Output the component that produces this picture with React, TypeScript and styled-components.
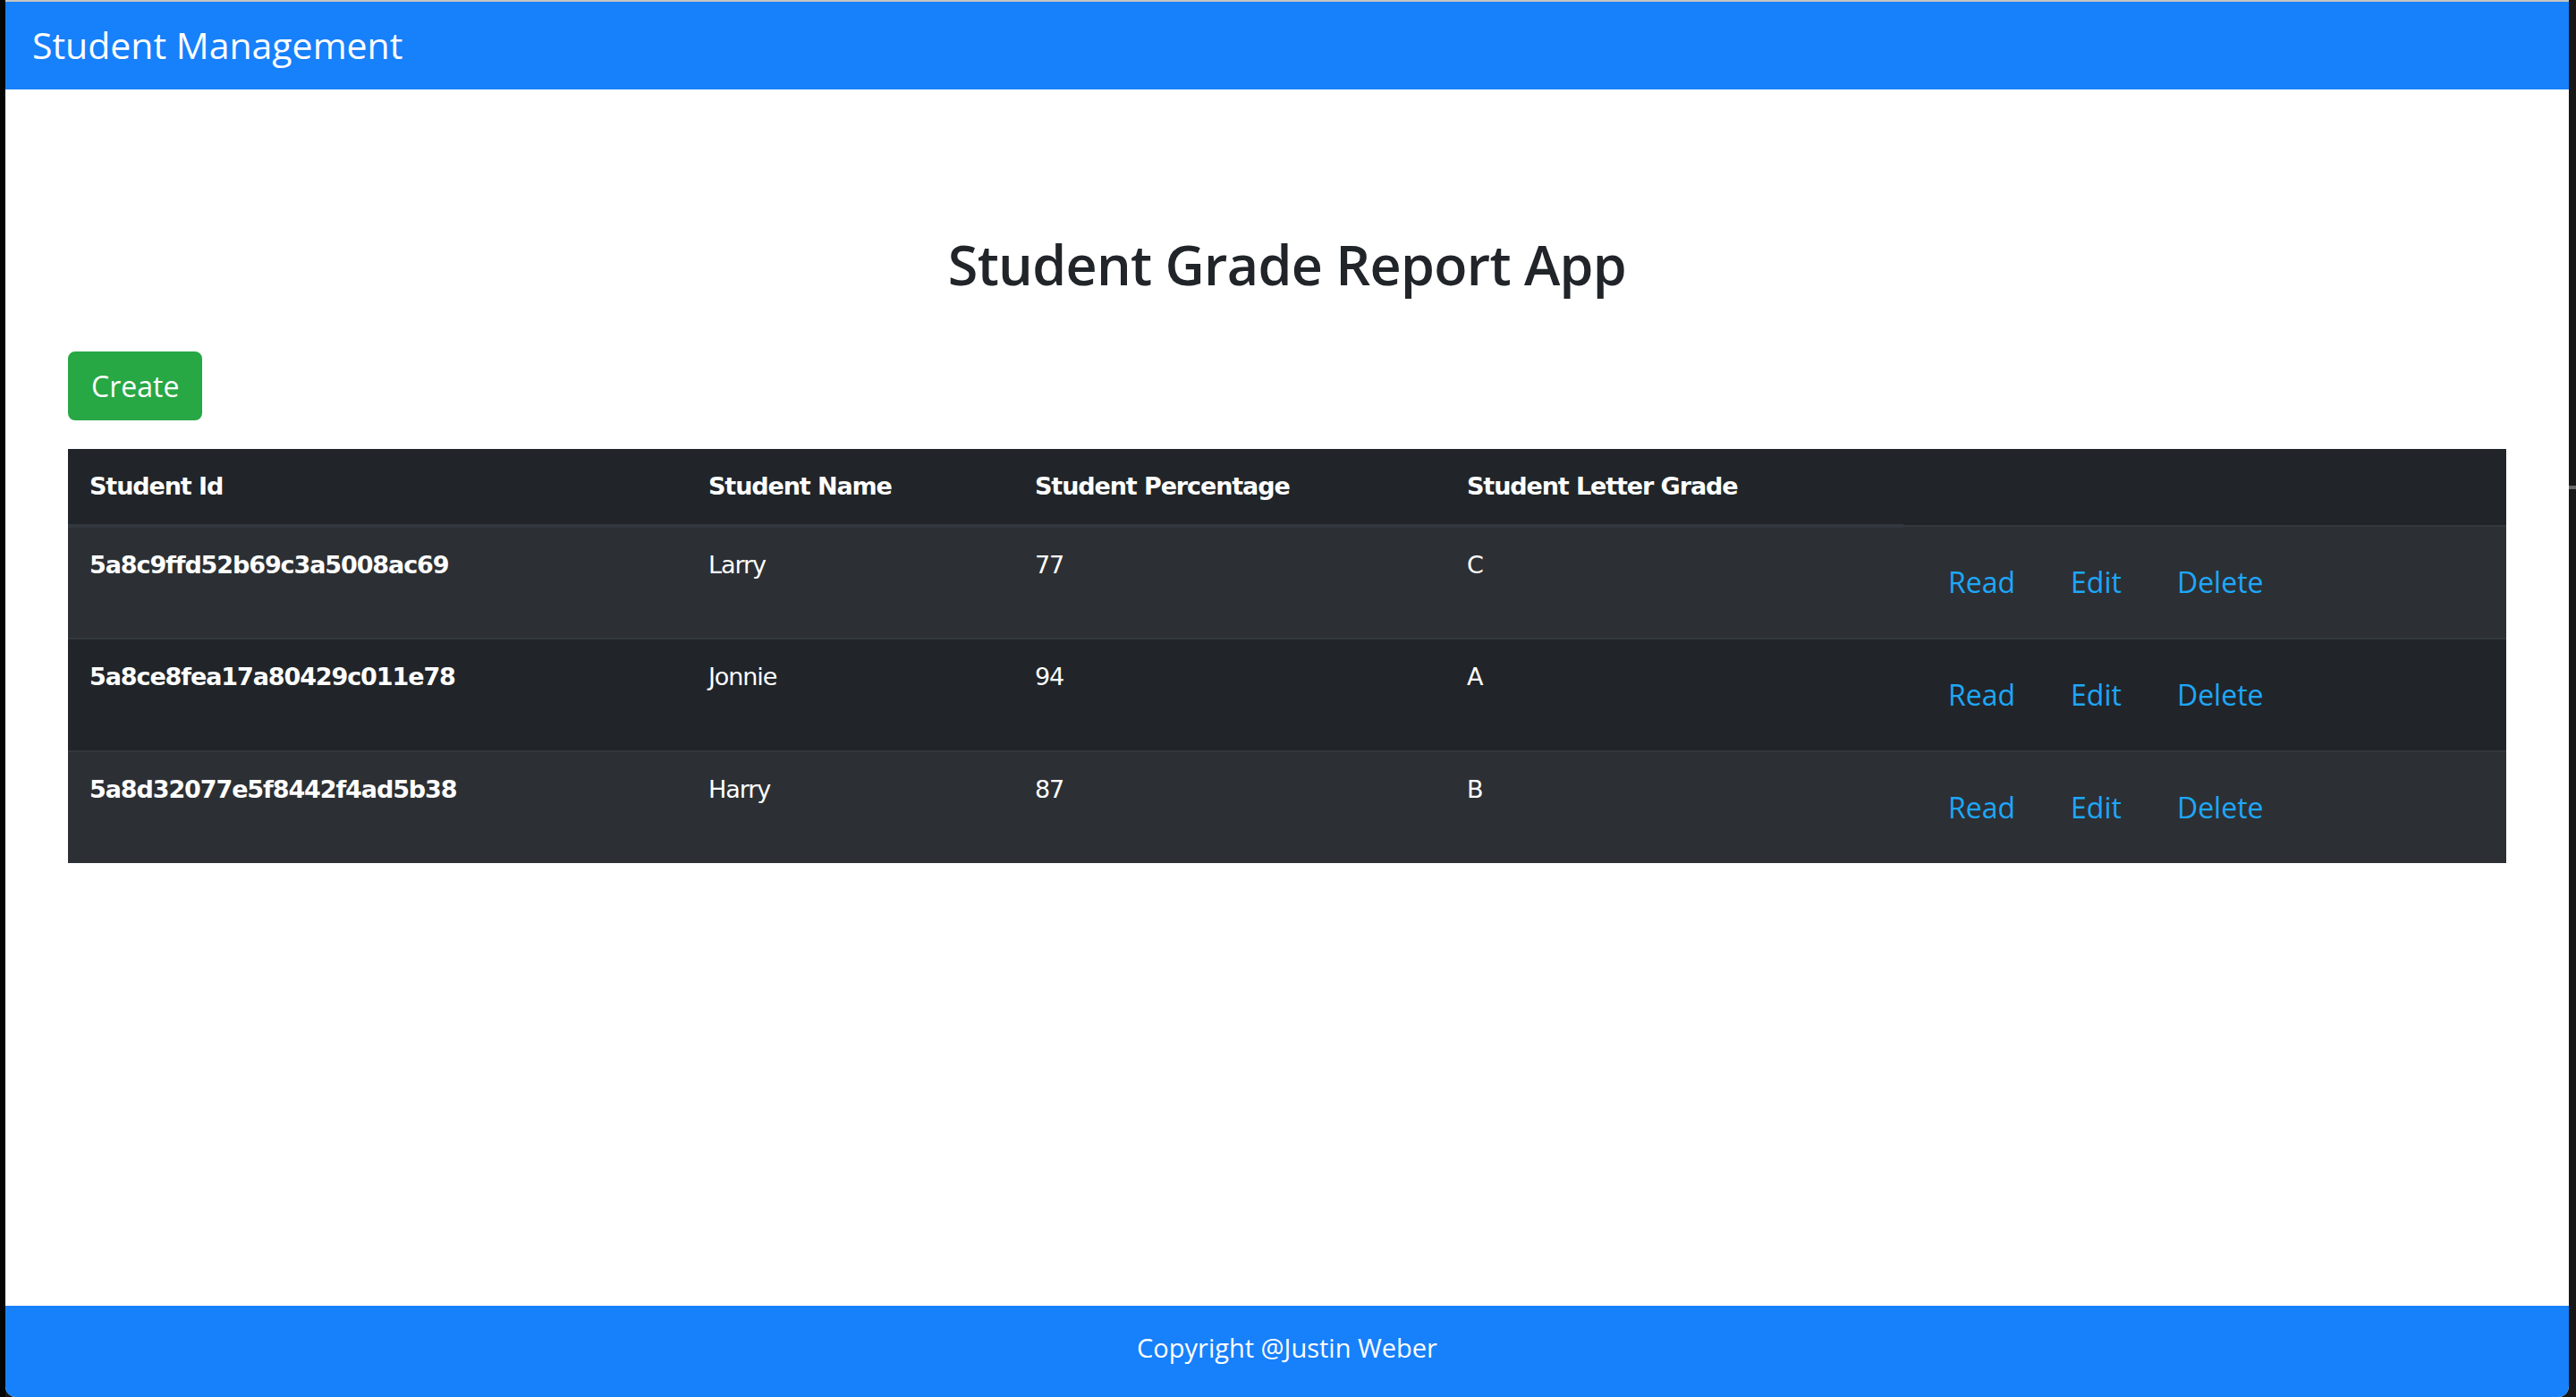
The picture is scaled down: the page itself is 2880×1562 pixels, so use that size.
import React from "react";
import styled, { createGlobalStyle } from "styled-components";

const GlobalStyle = createGlobalStyle`
  html, body {
    margin: 0;
    padding: 0;
    background: #121212;
  }
  body {
    font-family: "Open Sans", "Noto Sans", sans-serif;
  }
  * { box-sizing: border-box; }
`;

const Frame = styled.div`
  display: flex;
  width: 2880px;
  height: 1562px;
  background: #181818;
  overflow: hidden;
`;

const LeftEdge = styled.div`
  width: 6px;
  background: #040506;
`;

const RightEdge = styled.div`
  width: 8px;
  background: #181818;
  display: flex;
  flex-direction: column;
  padding-top: 543px;
`;

const ScrollMark = styled.div`
  height: 4px;
  background: #6b6b6b;
`;

const Window = styled.div`
  flex: 1;
  display: flex;
  flex-direction: column;
  background: #ffffff;
  border-top: 2px solid #c4c4c4;
  border-radius: 0 0 12px 12px;
  overflow: hidden;
`;

const NavBar = styled.header`
  height: 98px;
  flex-shrink: 0;
  display: flex;
  align-items: center;
  padding: 0 0 2px 30px;
  background: #1780fb;
`;

const Brand = styled.span`
  color: #ffffff;
  font-family: "Open Sans", sans-serif;
  font-size: 41px;
  line-height: 60px;
`;

const Main = styled.main`
  flex: 1;
  display: flex;
  flex-direction: column;
  padding: 159px 70px 0;
`;

const Title = styled.h2`
  margin: 0;
  text-align: center;
  font-family: "Open Sans", sans-serif;
  font-weight: 600;
  font-size: 61px;
  line-height: 74px;
  letter-spacing: -0.7px;
  color: #212529;
`;

const CreateButton = styled.button`
  align-self: flex-start;
  margin-top: 60px;
  height: 77px;
  padding: 0 24px;
  border: 2px solid #28a745;
  border-radius: 8px;
  background: #28a745;
  color: #ffffff;
  font-family: "Open Sans", sans-serif;
  font-size: 32px;
  line-height: 48px;
  cursor: pointer;
`;

const Table = styled.table`
  margin-top: 32px;
  width: 2726px;
  table-layout: fixed;
  border-collapse: collapse;
  background: #212529;
  color: #ffffff;
  font-family: "DejaVu Sans", "Liberation Sans", sans-serif;
  font-size: 27px;
  letter-spacing: -1.1px;
  line-height: 36px;
`;

const HeadCell = styled.th`
  padding: 24px;
  text-align: left;
  font-weight: bold;
  vertical-align: bottom;
  border-bottom: 4px solid #32383e;
`;

const Row = styled.tr<{ $striped: boolean }>`
  background: ${(p) => (p.$striped ? "#2c3034" : "transparent")};
`;

const Cell = styled.td<{ $bold?: boolean }>`
  padding: 24px;
  vertical-align: top;
  border-top: 2px solid #32383e;
  font-weight: ${(p) => (p.$bold ? "bold" : "normal")};
  white-space: nowrap;
`;

const Actions = styled.div`
  display: flex;
  gap: 10px;
`;

const LinkButton = styled.button`
  padding: 12px 24px;
  border: 2px solid transparent;
  background: transparent;
  color: #1ea7f9;
  font-family: "Open Sans", sans-serif;
  font-size: 32px;
  line-height: 48px;
  letter-spacing: 0;
  cursor: pointer;
`;

const Footer = styled.footer`
  height: 102px;
  flex-shrink: 0;
  display: flex;
  align-items: center;
  justify-content: center;
  padding-bottom: 10px;
  background: #1780fb;
  color: #ffffff;
  font-family: "Open Sans", sans-serif;
  font-size: 29px;
`;

type Student = { id: string; name: string; pct: number; grade: string };

const students: Student[] = [
  { id: "5a8c9ffd52b69c3a5008ac69", name: "Larry", pct: 77, grade: "C" },
  { id: "5a8ce8fea17a80429c011e78", name: "Jonnie", pct: 94, grade: "A" },
  { id: "5a8d32077e5f8442f4ad5b38", name: "Harry", pct: 87, grade: "B" },
];

export default function App() {
  return (
    <>
      <GlobalStyle />
      <Frame>
        <LeftEdge />
        <Window>
          <NavBar>
            <Brand>Student Management</Brand>
          </NavBar>
          <Main>
            <Title>Student Grade Report App</Title>
            <CreateButton>Create</CreateButton>
            <Table>
              <colgroup>
                <col style={{ width: 692 }} />
                <col style={{ width: 365 }} />
                <col style={{ width: 483 }} />
                <col style={{ width: 512 }} />
                <col style={{ width: 674 }} />
              </colgroup>
              <thead>
                <tr>
                  <HeadCell>Student Id</HeadCell>
                  <HeadCell>Student Name</HeadCell>
                  <HeadCell>Student Percentage</HeadCell>
                  <HeadCell>Student Letter Grade</HeadCell>
                </tr>
              </thead>
              <tbody>
                {students.map((s, i) => (
                  <Row key={s.id} $striped={i % 2 === 0}>
                    <Cell $bold>{s.id}</Cell>
                    <Cell>{s.name}</Cell>
                    <Cell>{s.pct}</Cell>
                    <Cell>{s.grade}</Cell>
                    <Cell>
                      <Actions>
                        <LinkButton>Read</LinkButton>
                        <LinkButton>Edit</LinkButton>
                        <LinkButton>Delete</LinkButton>
                      </Actions>
                    </Cell>
                  </Row>
                ))}
              </tbody>
            </Table>
          </Main>
          <Footer>Copyright @Justin Weber</Footer>
        </Window>
        <RightEdge>
          <ScrollMark />
        </RightEdge>
      </Frame>
    </>
  );
}
